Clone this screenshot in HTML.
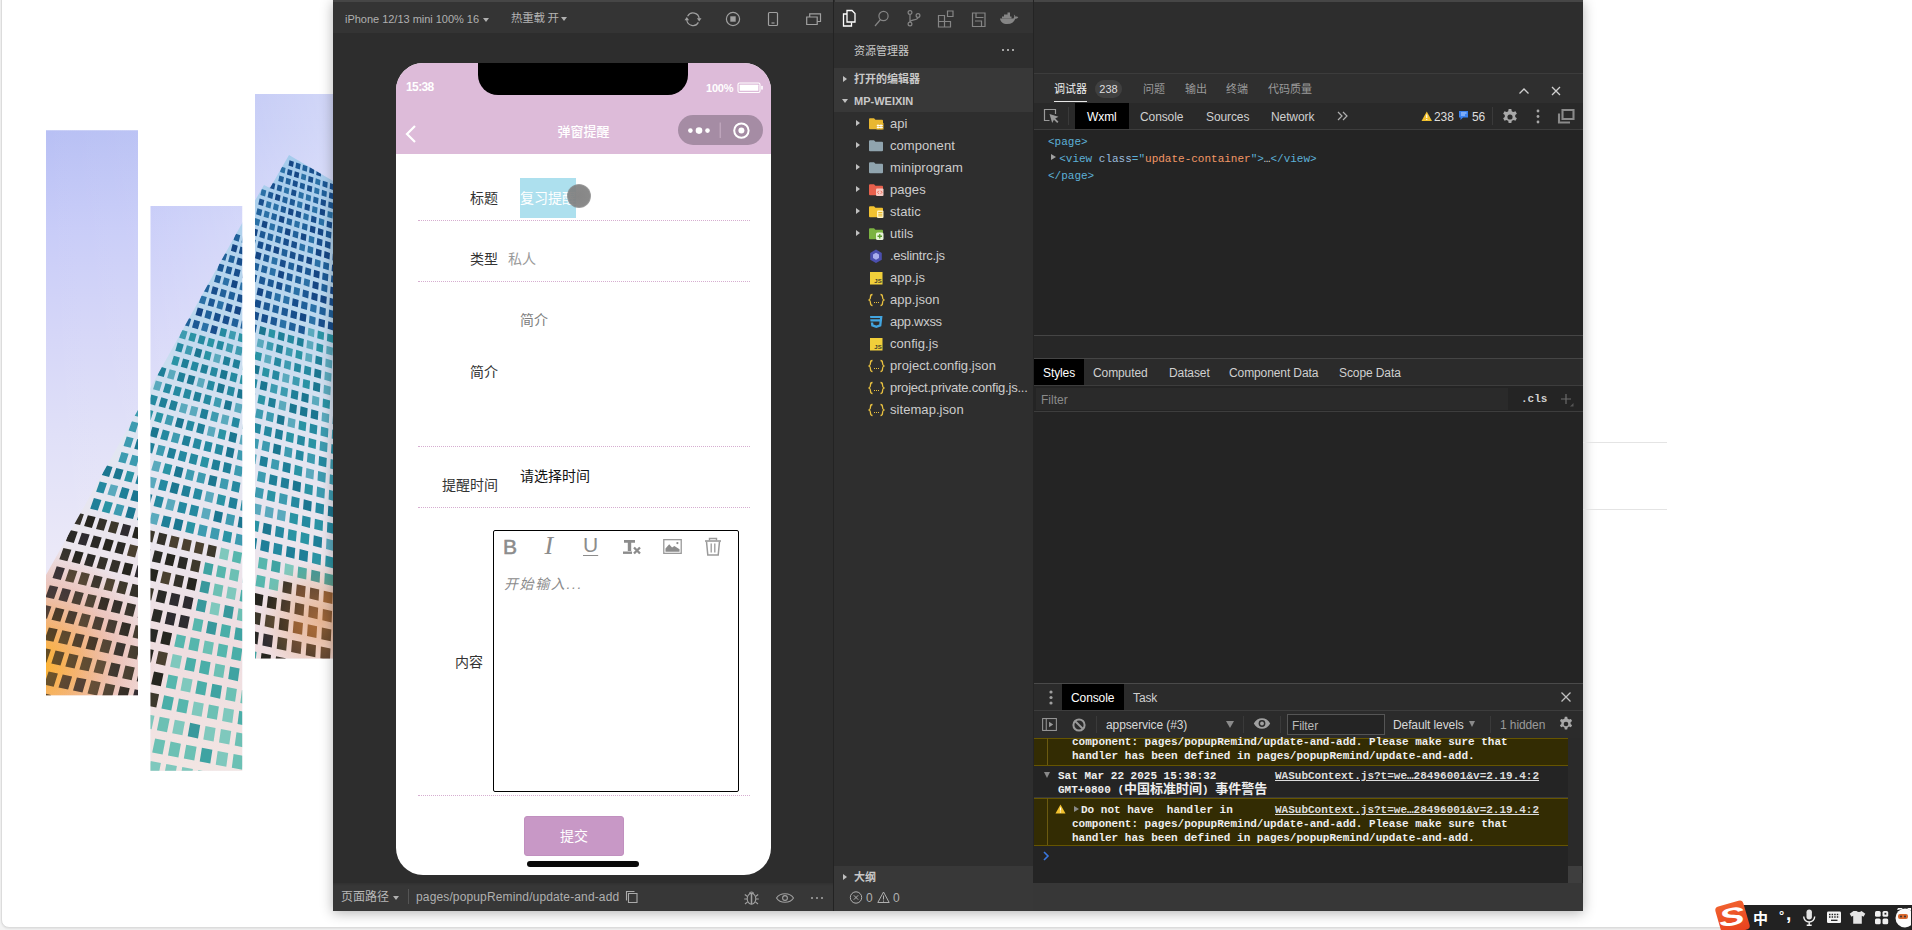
<!DOCTYPE html>
<html lang="zh-CN">
<head>
<meta charset="utf-8">
<title>弹窗提醒</title>
<style>
*{box-sizing:border-box;margin:0;padding:0}
html,body{width:1912px;height:930px;overflow:hidden}
body{background:#f3f3f3;font-family:"Liberation Sans","Noto Sans CJK SC",sans-serif;position:relative;font-size:12px;color:#ccc}
.abs{position:absolute}
#card{position:absolute;left:1px;top:-12px;width:1930px;height:940px;background:#fff;border:1px solid #dcdcdc;border-radius:8px;box-shadow:0 1px 2px rgba(0,0,0,.08)}
#win{position:absolute;left:333px;top:0;width:1250px;height:911px;background:#2e2e2e;box-shadow:0 2px 12px rgba(0,0,0,.3)}
/* simulator */
#sim{position:absolute;left:0;top:0;width:500px;height:911px;background:#2d2d2d}
#simtop{position:absolute;left:0;top:0;width:500px;height:32.500px;background:#343434;border-top:2px solid #464646}
#simbot{position:absolute;left:0;top:883px;width:500px;height:28px;background:linear-gradient(180deg,#313131 0,#373737 3px)}
/* explorer */
#exp{position:absolute;left:500px;top:0;width:200px;height:911px;background:#2e2e2e;border-left:1px solid #232323}
#expin{position:absolute;left:1px;top:0;width:198px;height:911px}
/* debugger */
#dbg{position:absolute;left:700px;top:0;width:550px;height:910px;background:#242424}

.caret{display:inline-block;width:0;height:0;border-left:3.5px solid transparent;border-right:3.5px solid transparent;border-top:4.5px solid #b0b0b0;vertical-align:1px;margin-left:1px}
#phone{position:absolute;left:63px;top:63px;width:375px;height:812px;background:#fff;border-radius:27px;overflow:hidden;color:#333}
#nav{position:absolute;left:0;top:0;width:375px;height:91px;background:#ddbbd9}
#notch{position:absolute;left:82px;top:-20px;width:210px;height:52px;background:#000;border-radius:20px}
#capsule{position:absolute;left:282px;top:52px;width:85px;height:30px;border-radius:15px;background:#a58ca4}
.lbl{position:absolute;font-size:14px;line-height:18px;color:#333;white-space:nowrap}
.dot{position:absolute;left:22px;width:332px;height:0;border-top:1px dotted #d6aed0}
#editor{position:absolute;left:97px;top:467px;width:246px;height:262px;border:1px solid #000;border-radius:2px}
.ic{color:#8c8c8c}

.tw{display:inline-block;width:0;height:0;border-top:3.500px solid transparent;border-bottom:3.500px solid transparent;border-left:4.500px solid #c0c0c0}
.twd{display:inline-block;width:0;height:0;border-left:3.500px solid transparent;border-right:3.500px solid transparent;border-top:4.500px solid #c0c0c0}
.row{position:absolute;left:0;width:198px;height:22px;line-height:22px;font-size:13px;color:#ccc;white-space:nowrap;overflow:hidden}
.row .tw{position:absolute;left:21px;top:7px}
.row .fi{position:absolute;left:33px;top:3px}
.row .fn{position:absolute;left:55px;top:0;letter-spacing:.06px}

.ptab{top:81px;font-size:11px;line-height:16px;color:#9a9a9a;white-space:nowrap}
.dtab{transform:translateY(1px);top:109px;font-size:12px;line-height:15px;color:#d0d0d0;white-space:nowrap;letter-spacing:-.1px}
.code{font:11px/17px "Liberation Mono",monospace;color:#ddd}
.tg{color:#5db0d7}.an{color:#9bbbdc}.av{color:#f29766}
.con{font:bold 11px/14px "Liberation Mono","Noto Sans CJK SC",monospace;color:#eee}
.lnk{text-decoration:underline;color:#ddd}
.warn{left:0;width:535px;background:#332c03;border-top:1px solid #665500;border-bottom:1px solid #665500}
#stat{position:absolute;left:700px;top:883px;width:550px;height:28px;background:#373737}
.cj{font-size:13px}
</style>
</head>
<body>
<div id="card"></div>
<!--BLD0--><svg id="bld" class="abs" style="left:0;top:0" width="346" height="800" viewBox="0 0 346 800">
<defs>
<clipPath id="strips"><rect x="46" y="130.200" width="92" height="565.100"/><rect x="150.500" y="206" width="91.700" height="564.800"/><rect x="255" y="94" width="92" height="564.500"/></clipPath>
<clipPath id="sil"><polygon points="289,155 345,188 345,800 -80,800 46,575 250,209 264,185 270,188"/></clipPath>
<linearGradient id="sky" x1="0" y1="0" x2="0" y2="1"><stop offset="0" stop-color="#b4bcf3"/><stop offset=".06" stop-color="#b8c0f4"/><stop offset=".2" stop-color="#c8ccf8"/><stop offset=".35" stop-color="#d5d6f8"/><stop offset=".5" stop-color="#e0e0f8"/><stop offset=".68" stop-color="#ebe9f8"/><stop offset="1" stop-color="#f0eef8"/></linearGradient><linearGradient id="skyh" x1="0" y1="0" x2="1" y2="0"><stop offset="0" stop-color="#fff" stop-opacity="0"/><stop offset=".3" stop-color="#fff" stop-opacity=".05"/><stop offset="1" stop-color="#fff" stop-opacity=".42"/></linearGradient>
<linearGradient id="frame" x1="0" y1="0" x2="0" y2="1"><stop offset="0" stop-color="#a4cbec"/><stop offset=".25" stop-color="#bcd8ee"/><stop offset=".45" stop-color="#e2e6f2"/><stop offset=".6" stop-color="#ebe6ee"/><stop offset=".75" stop-color="#efdde0"/><stop offset="1" stop-color="#f3e8e4"/></linearGradient>
<radialGradient id="glow" gradientUnits="userSpaceOnUse" cx="36" cy="665" r="120"><stop offset="0" stop-color="#ffb41e" stop-opacity=".95"/><stop offset=".35" stop-color="#f6a040" stop-opacity=".6"/><stop offset=".7" stop-color="#e89a80" stop-opacity=".3"/><stop offset="1" stop-color="#e89a80" stop-opacity="0"/></radialGradient>
<radialGradient id="glow2" gradientUnits="userSpaceOnUse" cx="320" cy="620" r="60"><stop offset="0" stop-color="#e08a40" stop-opacity=".5"/><stop offset="1" stop-color="#e08a40" stop-opacity="0"/></radialGradient>
</defs>
<g clip-path="url(#strips)">
<rect x="40" y="90" width="310" height="690" fill="url(#sky)"/><rect x="40" y="90" width="310" height="690" fill="url(#skyh)"/>
<g clip-path="url(#sil)">
<rect x="-90" y="150" width="440" height="660" fill="url(#frame)"/>
<rect x="-90" y="150" width="440" height="660" fill="url(#glow)"/>
<path fill="#154684" d="M289.5 160.2L293.9 161.7L293 167.1L288.5 165.6zM294.8 171.2L299.3 172.7L298.5 178.3L293.9 176.7zM275.9 193.8L280.6 195.4L279.6 201.2L274.8 199.7zM320.2 208.4L325.2 210.1L324.7 216.1L319.6 214.4zM288.8 208.1L293.8 209.8L292.9 215.8L287.9 214.2zM279.7 215.4L284.7 217.1L283.7 223.2L278.6 221.6zM310.4 225.4L315.6 227.1L314.9 233.4L309.7 231.7zM318.2 228L323.5 229.7L322.9 236L317.6 234.2zM262.7 220.5L267.7 222.1L266.5 228.4L261.4 226.7zM285.6 227.9L290.8 229.6L289.8 235.9L284.6 234.2zM301.3 233L306.5 234.6L305.8 241L300.5 239.3zM253 228.2L258 229.8L256.7 236.2L251.6 234.5zM316.2 248.5L321.7 250.2L321.1 256.7L315.6 255zM324.5 251.1L330 252.9L329.5 259.4L323.9 257.6zM332.8 253.8L338.4 255.5L338 262.1L332.4 260.3zM274.3 246L279.6 247.7L278.5 254.3L273.1 252.6zM306.9 256.4L312.3 258.1L311.6 264.8L306.1 263zM332.1 264.4L337.7 266.2L337.4 272.9L331.6 271.1zM232.6 244.1L237.8 245.8L236.1 252.4L230.9 250.8zM256.3 251.6L261.6 253.3L260.2 260L254.9 258.3zM314.1 269.8L319.8 271.6L319.2 278.5L313.4 276.7zM278.8 270.2L284.4 271.9L283.3 278.9L277.7 277.1zM313 280.9L318.8 282.7L318.2 289.7L312.3 287.9zM330.6 286.4L336.5 288.2L336.1 295.3L330.1 293.4zM311.9 292.2L317.8 294L317.2 301.2L311.2 299.3zM320.8 295L326.8 296.8L326.2 304L320.2 302.1zM232.5 279.7L238 281.4L236.4 288.6L230.8 286.9zM257.9 287.5L263.6 289.3L262.3 296.5L256.5 294.7zM300.4 312.8L306.5 314.6L305.7 322.1L299.5 320.2zM235.6 305.8L241.5 307.5L239.9 315L234 313.3zM197.7 307.4L203.4 309.1L201.4 316.7L195.5 315z"/><path fill="#1c5894" d="M296.2 162.5L300.7 164L299.8 169.4L295.3 167.9zM322.9 180.7L327.7 182.3L327.2 187.9L322.4 186.3zM300.4 182.5L305.1 184.1L304.3 189.7L299.6 188.1zM277.7 184.5L282.3 186.1L281.3 191.8L276.6 190.3zM328.6 201.5L333.6 203.1L333.2 209L328.1 207.3zM268.8 191.4L273.5 193L272.3 198.9L267.5 197.3zM290.4 198.6L295.2 200.2L294.3 206.1L289.4 204.5zM335.5 213.5L340.7 215.2L340.3 221.2L335.1 219.5zM281.4 205.7L286.3 207.3L285.3 213.3L280.4 211.7zM250.2 205.8L255 207.4L253.6 213.5L248.7 211.9zM326.2 230.6L331.5 232.3L331 238.6L325.7 236.8zM334.2 233.2L339.5 234.9L339.2 241.2L333.8 239.5zM342.3 235.8L347.7 237.6L347.4 243.9L342 242.1zM245.4 225.7L250.4 227.3L248.9 233.7L243.9 232.1zM260.6 230.6L265.7 232.3L264.4 238.7L259.3 237zM264.3 254.1L269.6 255.8L268.4 262.5L263 260.8zM305.6 267.2L311.2 268.9L310.5 275.7L304.8 274zM322.7 272.5L328.4 274.3L327.9 281.2L322.1 279.4zM331.4 275.3L337.1 277.1L336.7 284L330.9 282.1zM245.9 259.9L251.2 261.6L249.8 268.4L244.4 266.7zM287.3 272.8L292.9 274.6L291.9 281.5L286.3 279.8zM219 263.4L224.3 265.1L222.5 272L217.1 270.4zM227.1 265.9L232.4 267.6L230.7 274.5L225.3 272.9zM243.4 271L248.9 272.7L247.4 279.7L241.9 278zM251.7 273.5L257.2 275.3L255.8 282.3L250.3 280.6zM260.1 276.1L265.6 277.9L264.4 284.9L258.7 283.2zM268.5 278.8L274.1 280.5L273 287.6L267.3 285.8zM303.1 289.5L308.9 291.3L308.2 298.4L302.3 296.6zM338.9 300.6L345 302.5L344.7 309.7L338.6 307.8zM266.5 290.2L272.2 291.9L271 299.2L265.2 297.4zM246.9 296.5L252.7 298.3L251.2 305.6L245.4 303.9zM264.4 301.9L270.3 303.6L269.1 311L263.1 309.2zM282.3 307.3L288.2 309.1L287.2 316.5L281.2 314.7zM209.7 298L215.3 299.7L213.4 307.1L207.7 305.4zM271.4 316.5L277.4 318.3L276.3 325.9L270.2 324.1zM299 324.9L305.2 326.7L304.4 334.4L298.2 332.5zM194.2 319.7L200.1 321.5L197.9 329.3L192 327.5z"/><path fill="#20609a" d="M303 164.8L307.5 166.3L306.8 171.7L302.2 170.2zM279.4 175.5L284 177L283 182.6L278.3 181.1zM286.3 177.8L291 179.3L290 185L285.4 183.4zM322 189.7L326.9 191.4L326.4 197.1L321.5 195.4zM313.7 196.5L318.6 198.1L318 204L313 202.3zM283.1 196.2L287.9 197.8L286.9 203.7L282.1 202.1zM257.4 208.2L262.3 209.8L261 215.9L256.1 214.3zM272.2 213L277.1 214.6L276 220.8L271 219.1zM287.3 217.9L292.3 219.5L291.4 225.7L286.3 224.1zM302.6 222.9L307.7 224.6L307 230.8L301.8 229.1zM277.9 225.4L283 227L282 233.4L276.8 231.7zM293.4 230.4L298.6 232.1L297.8 238.4L292.5 236.7zM341.8 246L347.3 247.8L347 254.3L341.4 252.5zM268.3 233.1L273.5 234.7L272.3 241.2L267.1 239.5zM276.1 235.6L281.3 237.3L280.2 243.7L275 242zM235.3 233.6L240.3 235.2L238.7 241.7L233.6 240.1zM250.7 238.5L255.8 240.1L254.4 246.7L249.2 245zM282.3 248.6L287.7 250.3L286.7 256.9L281.3 255.2zM323.6 261.7L329.2 263.5L328.7 270.2L323 268.4zM340.7 267.1L346.4 268.9L346.1 275.7L340.3 273.9zM248.3 249.1L253.6 250.7L252.1 257.4L246.8 255.8zM288.9 261.9L294.4 263.6L293.4 270.4L287.9 268.6zM340.1 278L345.9 279.9L345.6 286.8L339.7 284.9zM222 252.4L227.2 254.1L225.4 260.8L220.1 259.2zM229.9 254.9L235.1 256.5L233.5 263.3L228.1 261.7zM254 262.4L259.4 264.1L258.1 271L252.6 269.3zM262.2 265L267.7 266.7L266.4 273.6L260.9 271.9zM295.8 275.5L301.4 277.3L300.6 284.2L294.9 282.4zM321.8 283.6L327.6 285.5L327.1 292.5L321.2 290.6zM339.5 289.2L345.5 291L345.2 298.1L339.2 296.2zM285.6 284.1L291.4 285.8L290.4 292.9L284.6 291.1zM216 274.7L221.4 276.3L219.5 283.4L214 281.8zM301.7 301L307.7 302.8L306.9 310.1L300.9 308.3zM319.9 306.6L325.9 308.4L325.4 315.8L319.3 313.9zM329.1 309.4L335.2 311.3L334.7 318.6L328.6 316.7zM338.3 312.2L344.5 314.1L344.2 321.5L337.9 319.6zM204.5 283.6L210 285.3L208 292.6L202.4 290.9zM221.3 288.7L226.8 290.4L225.1 297.7L219.4 296zM229.7 291.3L235.4 293L233.7 300.3L228 298.6zM273.3 304.6L279.2 306.3L278.1 313.8L272.1 312zM289.7 322.1L295.9 323.9L294.9 331.5L288.7 329.7zM206.4 310L212.2 311.7L210.2 319.4L204.4 317.6zM232.9 317.9L238.9 319.7L237.2 327.4L231.2 325.6zM241.9 320.6L247.9 322.4L246.4 330.1L240.3 328.3zM251 323.3L257 325.1L255.6 332.8L249.5 331zM185.4 317.1L191.2 318.9L188.9 326.6L183.1 324.9z"/><path fill="#184e8c" d="M309.8 167.1L314.4 168.7L313.8 174.1L309.1 172.5zM316.8 169.5L321.4 171L320.8 176.5L316.2 174.9zM287.9 168.9L292.4 170.4L291.5 175.9L286.9 174.4zM308.7 175.9L313.4 177.5L312.7 183L308 181.4zM330.1 183.1L334.9 184.7L334.5 190.4L329.7 188.7zM337.4 185.6L342.3 187.2L342 192.9L337 191.2zM293.3 180.1L298 181.7L297.1 187.3L292.4 185.8zM307.5 184.9L312.3 186.5L311.6 192.2L306.8 190.6zM329.4 192.2L334.3 193.8L333.9 199.6L328.9 197.9zM270.7 182.2L275.3 183.7L274.2 189.5L269.5 187.9zM291.9 189.3L296.6 190.8L295.7 196.6L290.9 195zM321.1 199L326.1 200.6L325.5 206.5L320.5 204.8zM336.2 204L341.2 205.7L340.9 211.6L335.8 209.9zM305.1 203.5L310.1 205.1L309.4 211L304.4 209.4zM259.6 198.5L264.3 200.1L263.1 206.1L258.3 204.5zM296.3 210.6L301.3 212.2L300.5 218.3L295.4 216.6zM311.5 215.6L316.6 217.2L316 223.3L310.8 221.7zM327 220.7L332.2 222.4L331.7 228.5L326.5 226.8zM247.8 215.7L252.7 217.2L251.3 223.5L246.3 221.9zM317.3 238.1L322.6 239.8L322 246.2L316.6 244.5zM325.3 240.7L330.7 242.5L330.3 248.9L324.8 247.1zM284 238.1L289.2 239.8L288.3 246.3L283 244.6zM291.9 240.7L297.2 242.4L296.4 248.8L291 247.1zM258.5 241L263.7 242.6L262.4 249.2L257.1 247.5zM266.3 243.5L271.6 245.2L270.4 251.7L265.1 250.1zM290.4 251.1L295.8 252.9L294.9 259.5L289.5 257.8zM298.6 253.7L304 255.5L303.2 262.1L297.7 260.4zM240.4 246.6L245.6 248.2L244.1 254.9L238.8 253.3zM280.6 259.3L286 261L285 267.7L279.5 266zM297.2 264.5L302.7 266.3L301.9 273.1L296.3 271.3zM237.8 257.4L243.1 259L241.6 265.9L236.2 264.2zM235.2 268.4L240.6 270.1L239 277.1L233.5 275.4zM277 281.4L282.7 283.2L281.6 290.2L275.9 288.5zM329.8 297.8L335.8 299.6L335.4 306.8L329.4 304.9zM292.8 298.3L298.7 300.1L297.8 307.3L291.9 305.5zM212.8 286.2L218.4 287.9L216.5 295.1L210.9 293.4zM238.3 293.9L244 295.6L242.4 303L236.7 301.2zM255.6 299.2L261.4 300.9L260.1 308.3L254.2 306.5zM291.3 310L297.3 311.9L296.4 319.3L290.3 317.5zM318.9 318.4L325.1 320.3L324.5 327.8L318.3 325.9zM328.3 321.3L334.5 323.2L334.1 330.7L327.7 328.8zM337.7 324.1L344 326.1L343.7 333.6L337.3 331.7zM226.9 303.1L232.7 304.9L231 312.4L225.1 310.6zM253.4 311.1L259.3 312.9L257.9 320.4L251.9 318.6zM262.3 313.8L268.3 315.6L267 323.2L261 321.4zM215.2 312.6L221 314.4L219.1 322L213.2 320.3zM224 315.3L229.9 317L228.1 324.7L222.2 322.9zM212 325L218 326.8L216.1 334.6L210 332.8z"/><path fill="#2a70a6" d="M281.1 166.6L285.6 168.1L284.6 173.6L280.1 172.1zM301.7 173.5L306.3 175.1L305.6 180.6L300.9 179.1zM315.8 178.3L320.5 179.9L319.9 185.4L315.1 183.8zM314.7 187.3L319.5 188.9L319 194.6L314.1 193zM336.8 194.7L341.8 196.4L341.4 202.1L336.4 200.4zM284.7 186.9L289.4 188.4L288.5 194.2L283.7 192.6zM299.1 191.6L303.9 193.2L303.1 199L298.2 197.4zM306.3 194.1L311.2 195.7L310.5 201.5L305.6 199.9zM261.7 189.1L266.3 190.6L265.1 196.5L260.4 194.9zM297.7 201L302.6 202.6L301.8 208.6L296.9 206.9zM312.6 205.9L317.6 207.6L317 213.6L311.9 211.9zM327.8 211L332.9 212.6L332.5 218.6L327.3 217zM266.8 200.9L271.6 202.5L270.4 208.5L265.6 206.9zM274.1 203.3L278.9 204.9L277.8 210.9L272.9 209.3zM303.9 213.1L308.9 214.7L308.2 220.8L303.1 219.1zM319.2 218.1L324.4 219.8L323.8 225.9L318.6 224.2zM334.9 223.2L340.1 225L339.8 231.1L334.5 229.4zM264.8 210.6L269.7 212.2L268.5 218.3L263.5 216.7zM294.9 220.4L300 222L299.1 228.2L294 226.6zM255.2 218.1L260.2 219.7L258.8 225.9L253.8 224.3zM270.3 222.9L275.3 224.6L274.2 230.8L269.1 229.2zM309.2 235.5L314.5 237.2L313.9 243.6L308.5 241.9zM333.5 243.4L339 245.1L338.6 251.6L333.1 249.8zM300 243.2L305.3 244.9L304.5 251.4L299.1 249.7zM308.1 245.8L313.4 247.6L312.8 254.1L307.3 252.3zM341.2 256.5L346.8 258.3L346.6 264.9L340.9 263.1zM242.9 236L248 237.7L246.5 244.2L241.4 242.6zM315.2 259L320.7 260.8L320.1 267.5L314.5 265.7zM272.4 256.7L277.8 258.4L276.7 265.1L271.2 263.4zM270.5 267.6L276 269.3L274.8 276.2L269.3 274.5zM304.4 278.2L310.1 280L309.3 286.9L303.6 285.1zM294.3 286.7L300.1 288.5L299.2 295.7L293.4 293.9zM224.2 277.2L229.7 278.9L227.9 286L222.4 284.3zM240.9 282.3L246.5 284L244.9 291.2L239.3 289.5zM249.3 284.9L255 286.6L253.6 293.8L247.9 292.1zM275.2 292.8L281 294.6L279.9 301.9L274 300.1zM284 295.5L289.8 297.3L288.8 304.6L282.9 302.8zM310.8 303.8L316.8 305.6L316.1 312.9L310 311.1zM309.6 315.6L315.7 317.5L315.1 324.9L308.9 323.1zM201.2 295.4L206.8 297.1L204.7 304.5L199 302.8zM218.3 300.5L224 302.3L222.1 309.7L216.4 308zM244.5 308.4L250.3 310.2L248.8 317.7L242.9 315.9zM280.5 319.3L286.6 321.1L285.6 328.7L279.4 326.9zM203.1 322.4L209 324.1L206.9 331.9L201 330.2z"/><path fill="#5aa9bd" d="M308.4 327.7L314.6 329.6L314 337.2L307.7 335.3zM307.2 340.1L313.5 342L312.9 349.8L306.4 347.9zM326.6 345.8L333.1 347.8L332.6 355.6L326.1 353.7zM258 338.6L264.2 340.4L262.9 348.3L256.6 346.5zM305.9 352.7L312.4 354.6L311.7 362.6L305.1 360.7zM325.7 358.5L332.3 360.5L331.9 368.5L325.2 366.6zM265.3 354.2L271.7 356L270.5 364.1L264 362.3zM324.9 371.5L331.6 373.5L331.1 381.7L324.3 379.7zM214.9 353.4L221.2 355.2L219.3 363.4L213 361.6zM283.1 373L289.7 374.9L288.7 383.3L282 381.4zM324 384.8L330.8 386.8L330.3 395.2L323.4 393.2zM312.5 395.4L319.4 397.4L318.8 405.9L311.8 403.9zM333.7 401.4L340.8 403.5L340.4 412.1L333.2 410zM169.7 369.3L176 371.1L173.5 379.7L167.1 377.9zM198.7 377.5L205.1 379.3L203 387.9L196.5 386.1zM248.6 391.6L255.3 393.5L253.9 402.1L247.1 400.2zM279.6 400.3L286.5 402.3L285.4 411L278.4 409zM322.1 412.3L329.3 414.3L328.8 423.1L321.5 421.1zM155.8 380.5L162.2 382.2L159.5 391L153 389.2zM235.8 402.7L242.6 404.6L241 413.5L234.1 411.6zM288.4 417.4L295.6 419.4L294.6 428.3L287.4 426.3zM181.3 402.9L188 404.7L185.7 413.7L178.9 411.8zM191.5 405.7L198.3 407.5L196.1 416.5L189.2 414.7zM222.5 414.2L229.4 416.1L227.6 425.1L220.6 423.2zM208.8 425.9L215.8 427.8L213.9 437.1L206.8 435.2zM241 434.7L248.2 436.6L246.6 445.9L239.3 443.9zM249.5 452.7L256.8 454.7L255.4 464.2L247.9 462.2zM306.4 467.9L314.1 470L313.4 479.6L305.6 477.5zM154.1 460.4L161.3 462.3L158.6 472.1L151.2 470.2zM244.4 483.9L252.1 485.9L250.6 495.8L242.8 493.8zM149.5 476.4L156.9 478.3L154.1 488.4L146.6 486.5zM206.5 491L214.2 492.9L212.2 503.1L204.4 501.1zM253.8 503.1L261.7 505.1L260.3 515.3L252.3 513.3zM265.8 506.1L273.8 508.2L272.6 518.4L264.5 516.4zM277.9 509.2L286 511.3L284.9 521.5L276.8 519.5zM110.8 484.2L118.2 486L114.9 496.4L107.4 494.5zM167.9 498.6L175.6 500.5L173 510.9L165.2 508.9zM203.1 507.4L211 509.4L208.9 519.8L201 517.8zM326.5 538.5L335 540.7L334.6 551.2L326 549zM151.8 512.4L159.6 514.4L156.8 525L148.9 523.1z"/><path fill="#2a93a4" d="M317.9 330.5L324.2 332.4L323.6 340.1L317.2 338.2zM327.4 333.4L333.8 335.3L333.3 343L326.9 341.1zM269.4 328.8L275.5 330.6L274.4 338.4L268.2 336.5zM316.8 342.9L323.3 344.9L322.7 352.7L316.2 350.8zM336.4 348.8L343 350.7L342.6 358.6L336 356.6zM239.3 333.1L245.5 334.9L243.9 342.7L237.7 340.9zM296.2 349.8L302.6 351.7L301.8 359.7L295.3 357.8zM335.8 361.5L342.4 363.5L342.1 371.5L335.3 369.5zM190.6 332.4L196.6 334.1L194.4 342.1L188.3 340.3zM208.8 337.7L214.9 339.4L212.9 347.5L206.8 345.7zM255.7 351.4L262 353.2L260.7 361.3L254.3 359.4zM205.5 350.6L211.7 352.4L209.7 360.6L203.4 358.8zM243.6 361.6L250.1 363.5L248.6 371.8L242.1 369.9zM263.2 367.3L269.7 369.2L268.5 377.5L261.9 375.6zM303.3 378.9L310.1 380.8L309.4 389.2L302.5 387.2zM334.4 387.8L341.3 389.8L341 398.2L334 396.2zM173.8 355.8L179.9 357.6L177.5 365.9L171.2 364.2zM241.1 375L247.6 376.9L246.1 385.3L239.5 383.5zM323 398.4L330.1 400.4L329.6 409L322.5 407zM258.8 394.5L265.6 396.4L264.3 405.1L257.4 403.1zM299.2 420.4L306.4 422.4L305.6 431.3L298.4 429.3zM286.8 431.8L294.1 433.8L293.1 443L285.7 441zM308.9 437.9L316.3 440L315.7 449.1L308.2 447.1zM146.7 409.1L153.4 410.9L150.6 420.1L143.8 418.3zM156.9 411.9L163.6 413.7L161 422.9L154.1 421zM219.5 428.8L226.5 430.7L224.7 440L217.5 438.1zM294.9 464.8L302.5 466.9L301.6 476.4L293.9 474.4zM202.1 456.2L209.4 458.2L207.3 467.9L199.9 465.9zM305.2 483.4L313 485.5L312.3 495.3L304.3 493.2zM165.1 463.2L172.4 465.1L169.8 475L162.4 473.1zM267.9 490L275.7 492L274.5 502L266.6 500zM127.2 470.7L134.5 472.5L131.5 482.6L124.1 480.8zM218.2 494L226 495.9L224.1 506.1L216.3 504.1zM290.2 512.4L298.3 514.5L297.4 524.7L289.2 522.6zM314.9 518.7L323.1 520.8L322.6 531.1L314.2 529zM251.4 519.6L259.5 521.6L258.1 532.1L249.9 530zM288.5 529L296.8 531L295.9 541.5L287.5 539.4zM301.1 532.1L309.5 534.2L308.7 544.7L300.2 542.6zM339.4 541.8L348 543.9L347.7 554.4L339 552.3zM105.3 500.9L112.9 502.8L109.4 513.4L101.8 511.5zM187.5 521.3L195.5 523.3L193.2 533.9L185.2 531.9zM224.1 530.4L232.2 532.4L230.5 543.1L222.2 541zM312.6 552.3L321.2 554.4L320.6 565.2L311.9 563zM325.7 555.5L334.3 557.7L333.9 568.4L325.1 566.3z"/><path fill="#3d9bb0" d="M337.1 336.3L343.5 338.3L343.2 346L336.7 344zM230.2 330.4L236.2 332.1L234.5 340L228.4 338.2zM267.4 341.3L273.7 343.2L272.5 351.1L266.1 349.3zM286.5 347L292.9 348.9L291.9 356.8L285.5 354.9zM181.6 329.7L187.5 331.5L185.2 339.4L179.2 337.7zM227.3 343.1L233.5 344.9L231.8 352.9L225.5 351.1zM236.7 345.8L242.9 347.6L241.3 355.7L235 353.9zM246.2 348.6L252.4 350.4L251 358.5L244.6 356.6zM284.8 359.9L291.3 361.8L290.3 369.9L283.8 368zM186.9 345.3L193 347L190.8 355.2L184.6 353.4zM293.2 375.9L299.9 377.9L299 386.2L292.2 384.3zM271.2 383.6L277.9 385.5L276.7 394L269.9 392.1zM281.4 386.5L288.1 388.4L287.1 397L280.2 395zM215.3 397L222 398.9L220.1 407.7L213.3 405.8zM256.6 408.5L263.5 410.4L262.2 419.3L255.1 417.4zM267.1 411.4L274.1 413.4L272.9 422.3L265.8 420.3zM321.1 426.5L328.4 428.5L327.9 437.5L320.5 435.5zM332.2 429.6L339.6 431.6L339.2 440.6L331.7 438.6zM212.1 411.3L219 413.2L217 422.2L210.1 420.3zM320.2 441L327.6 443.1L327.1 452.2L319.5 450.2zM136.7 406.4L143.3 408.2L140.4 417.3L133.6 415.5zM167.1 414.6L173.9 416.5L171.4 425.7L164.5 423.8zM251.9 437.6L259.1 439.6L257.7 448.9L250.4 446.9zM262.9 440.6L270.2 442.6L268.9 451.9L261.5 449.9zM285.1 446.6L292.5 448.6L291.5 458L284 456zM307.7 452.8L315.2 454.8L314.6 464.2L306.9 462.1zM330.7 459L338.4 461.1L338 470.5L330.2 468.4zM131.8 421.2L138.5 423L135.5 432.4L128.6 430.6zM173.4 432.3L180.4 434.2L177.9 443.6L170.8 441.8zM238.3 449.7L245.7 451.7L244.1 461.2L236.7 459.2zM272 458.7L279.5 460.7L278.3 470.3L270.7 468.2zM318.1 471.1L325.9 473.1L325.3 482.7L317.5 480.6zM329.9 474.2L337.7 476.3L337.3 485.9L329.4 483.8zM126.7 436.4L133.6 438.2L130.6 447.8L123.5 446zM158.5 444.8L165.6 446.6L162.9 456.3L155.8 454.4zM235.6 465.1L243.1 467.1L241.5 476.8L233.9 474.8zM258.4 471.1L266 473.1L264.7 482.9L257 480.9zM317.1 486.6L325 488.7L324.4 498.5L316.4 496.4zM329.1 489.8L337.1 491.9L336.7 501.7L328.6 499.6zM121.5 451.9L128.6 453.8L125.5 463.6L118.3 461.8zM132.3 454.7L139.4 456.6L136.4 466.4L129.2 464.6zM187.3 469L194.7 470.9L192.5 480.9L184.9 478.9zM198.6 471.9L206 473.9L203.9 483.8L196.3 481.9zM221.3 477.9L228.9 479.8L227.1 489.8L219.4 487.8zM256.1 486.9L263.9 488.9L262.5 498.9L254.7 496.9zM279.8 493.1L287.7 495.1L286.6 505.1L278.7 503zM227.1 513.5L235.1 515.5L233.3 525.9L225.2 523.9zM116.8 503.8L124.4 505.7L121.2 516.2L113.4 514.3zM199.6 524.3L207.7 526.3L205.6 536.9L197.4 534.9zM211.8 527.3L219.9 529.3L218 540L209.8 538zM236.5 533.4L244.7 535.5L243.1 546.1L234.7 544.1z"/><path fill="#1b7690" d="M260.2 326L266.3 327.9L265 335.6L258.8 333.8zM314.7 368.6L321.4 370.5L320.8 378.7L314 376.8zM196.2 347.9L202.3 349.7L200.2 357.9L194 356.1zM253.4 364.5L259.9 366.3L258.5 374.6L251.9 372.7zM313.6 381.8L320.4 383.8L319.8 392.2L312.9 390.2zM221.4 369.4L227.9 371.3L226.1 379.7L219.6 377.8zM261 380.7L267.7 382.6L266.4 391.1L259.7 389.2zM302 392.4L308.9 394.4L308.2 402.9L301.2 400.9zM188.9 374.8L195.4 376.6L193.1 385.1L186.6 383.3zM218.4 383.1L225 384.9L223.1 393.5L216.5 391.7zM238.4 388.7L245.1 390.6L243.6 399.3L236.8 397.4zM290.1 403.3L297 405.2L296.1 414L289.1 412zM300.6 406.2L307.7 408.2L306.9 417L299.8 415zM311.3 409.3L318.4 411.3L317.8 420L310.6 418zM225.5 399.9L232.2 401.7L230.5 410.6L223.6 408.7zM277.7 414.4L284.8 416.4L283.7 425.3L276.6 423.3zM243.6 420L250.6 421.9L249.1 431L242 429zM177.4 417.4L184.3 419.3L181.9 428.5L174.9 426.6zM230.2 431.7L237.3 433.7L235.6 442.9L228.4 441zM273.9 443.6L281.3 445.6L280.2 454.9L272.7 452.9zM152.4 426.7L159.3 428.6L156.6 438L149.6 436.1zM227.3 446.8L234.6 448.7L232.8 458.2L225.5 456.2zM137.2 439.1L144.2 441L141.3 450.6L134.2 448.8zM247 468.1L254.5 470.1L253.1 479.8L245.4 477.8zM293.3 480.3L301.1 482.4L300.3 492.2L292.4 490.1zM176.1 466.1L183.5 468L181.1 477.9L173.6 476zM209.9 474.9L217.4 476.8L215.5 486.8L207.8 484.8zM303.8 499.3L311.8 501.4L311.1 511.4L303 509.3zM328.3 505.7L336.4 507.8L336 517.8L327.7 515.7zM105.3 465.1L112.5 466.9L109.1 477L101.8 475.1zM116.3 467.9L123.5 469.7L120.3 479.8L112.9 477.9zM172.1 482.1L179.6 484.1L177.1 494.2L169.5 492.3zM340 525.1L348.4 527.3L348.1 537.6L339.6 535.4zM133.4 489.9L140.9 491.8L137.9 502.1L130.3 500.2zM144.8 492.7L152.4 494.7L149.5 505L141.9 503.1zM215.1 510.4L223 512.4L221.1 522.9L213.1 520.9zM239.2 516.5L247.2 518.5L245.6 529L237.5 527zM263.7 522.7L271.8 524.7L270.6 535.2L262.3 533.1zM128.4 506.6L136 508.5L133 519.1L125.2 517.2zM140 509.5L147.8 511.4L144.8 522.1L137 520.1zM175.5 518.3L183.4 520.3L181 530.9L173 529z"/><path fill="#1f7f98" d="M278.7 331.6L284.9 333.4L283.9 341.2L277.6 339.3zM297.6 337.2L303.9 339.1L303.1 346.9L296.7 345zM276.9 344.1L283.2 346L282.1 354L275.7 352.1zM315.8 355.6L322.3 357.5L321.8 365.6L315.1 363.6zM224.4 356.1L230.7 357.9L229 366.1L222.6 364.3zM234 358.9L240.4 360.7L238.7 368.9L232.3 367.1zM183.1 358.5L189.4 360.3L187.1 368.6L180.8 366.8zM202.1 363.9L208.5 365.7L206.4 374.1L200 372.3zM291.6 389.4L298.5 391.4L297.6 399.9L290.7 398zM160.2 366.6L166.4 368.4L163.8 377L157.5 375.2zM179.3 372L185.6 373.8L183.3 382.4L176.8 380.6zM269.2 397.4L276 399.3L274.8 408L267.9 406.1zM333 415.4L340.2 417.4L339.8 426.2L332.5 424.1zM195.1 391.4L201.7 393.3L199.6 402.1L192.9 400.2zM161.3 397.3L167.9 399.2L165.2 408.1L158.6 406.3zM171.3 400.1L177.9 401.9L175.4 410.9L168.7 409.1zM201.8 408.5L208.6 410.3L206.5 419.4L199.6 417.5zM275.9 428.8L283.1 430.8L282 439.9L274.7 438zM198.3 423.1L205.2 425L203.1 434.2L196.1 432.3zM142 423.9L148.9 425.8L146 435.2L139.1 433.3zM184 435.2L191.1 437.1L188.7 446.5L181.6 444.6zM260.7 455.7L268.1 457.7L266.8 467.2L259.3 465.2zM283.4 461.8L290.9 463.8L289.9 473.3L282.3 471.3zM147.8 441.9L154.9 443.8L152.1 453.4L144.9 451.6zM169.3 447.6L176.4 449.5L173.9 459.1L166.7 457.2zM213.2 459.2L220.5 461.1L218.6 470.8L211.1 468.9zM224.3 462.1L231.8 464.1L230 473.8L222.5 471.8zM270 474.2L277.6 476.2L276.5 485.9L268.7 483.9zM281.6 477.2L289.3 479.3L288.3 489L280.5 487zM340.6 508.9L348.8 511L348.6 521L340.2 518.9zM138.3 473.5L145.7 475.4L142.7 485.5L135.3 483.6zM183.5 485.1L191 487L188.7 497.2L181 495.2zM230 497L237.8 499L236.1 509.2L228.2 507.2zM122.1 487L129.5 488.9L126.4 499.2L118.8 497.3zM313.8 535.3L322.2 537.4L321.6 547.9L313.1 545.8zM93.9 498.1L101.4 499.9L97.8 510.5L90.2 508.7zM163.6 515.4L171.5 517.3L168.9 527.9L160.9 526zM248.9 536.5L257.2 538.6L255.7 549.2L247.4 547.2zM261.5 539.6L269.8 541.7L268.5 552.4L260.1 550.3zM286.9 545.9L295.3 548L294.4 558.7L285.8 556.6zM299.7 549.1L308.2 551.2L307.4 561.9L298.8 559.8zM338.8 558.8L347.5 560.9L347.2 571.7L338.4 569.5z"/><path fill="#2589a0" d="M288.1 334.4L294.4 336.2L293.4 344L287.1 342.1zM221.1 327.7L227.1 329.4L225.3 337.3L219.2 335.5zM248.6 335.8L254.8 337.6L253.3 345.5L247.1 343.7zM199.7 335L205.7 336.8L203.6 344.8L197.5 343zM218 340.4L224.2 342.1L222.3 350.2L216.1 348.4zM275 357L281.5 358.9L280.4 367L273.8 365.1zM294.7 362.7L301.3 364.7L300.4 372.8L293.8 370.9zM304.7 365.6L311.3 367.6L310.6 375.8L303.8 373.8zM335.1 374.5L341.9 376.5L341.5 384.7L334.7 382.7zM177.7 342.6L183.8 344.4L181.4 352.5L175.3 350.8zM273.1 370.1L279.7 372L278.6 380.4L271.9 378.5zM192.6 361.2L198.9 363L196.7 371.4L190.3 369.6zM211.7 366.7L218.1 368.5L216.2 376.9L209.7 375.1zM231.2 372.2L237.7 374.1L236 382.5L229.5 380.6zM251 377.9L257.6 379.7L256.2 388.2L249.5 386.3zM208.5 380.3L215 382.1L213.1 390.7L206.4 388.9zM228.4 385.9L235 387.7L233.3 396.4L226.6 394.5zM165.5 383.2L172 385L169.4 393.7L162.9 391.9zM175.3 385.9L181.8 387.7L179.4 396.5L172.8 394.7zM185.2 388.6L191.7 390.5L189.5 399.3L182.8 397.4zM205.2 394.2L211.8 396.1L209.8 404.9L203.1 403zM246.1 405.6L253 407.5L251.5 416.4L244.6 414.5zM310.1 423.4L317.4 425.4L316.7 434.4L309.4 432.4zM151.3 394.6L157.9 396.4L155.1 405.4L148.5 403.6zM233 417.1L240 419L238.3 428L231.3 426.1zM254.3 422.9L261.3 424.8L260 433.9L252.8 432zM265 425.9L272.2 427.8L270.9 436.9L263.7 435zM297.8 434.9L305.1 436.9L304.3 446L296.9 444zM331.5 444.1L339 446.2L338.6 455.4L331 453.3zM187.8 420.2L194.7 422.1L192.4 431.3L185.5 429.5zM296.4 449.7L303.8 451.7L303 461.1L295.4 459zM319.1 455.9L326.8 457.9L326.2 467.3L318.5 465.2zM162.9 429.5L169.8 431.4L167.2 440.8L160.2 438.9zM194.7 438L201.8 439.9L199.6 449.4L192.4 447.5zM205.5 440.9L212.6 442.8L210.6 452.3L203.4 450.4zM216.3 443.8L223.6 445.8L221.7 455.2L214.4 453.3zM180.1 450.5L187.3 452.4L185 462L177.7 460.1zM191 453.3L198.3 455.3L196.1 464.9L188.7 463zM143.1 457.5L150.3 459.4L147.5 469.3L140.2 467.4zM232.8 480.8L240.5 482.8L238.8 492.8L231.1 490.8zM291.8 496.2L299.7 498.2L298.8 508.2L290.8 506.2zM316 502.5L324.1 504.6L323.5 514.6L315.3 512.5zM160.7 479.2L168.2 481.2L165.6 491.3L158 489.4zM195 488L202.6 490L200.4 500.1L192.7 498.2zM241.8 500L249.7 502L248.2 512.2L240.2 510.2zM302.5 515.5L310.7 517.6L309.9 527.9L301.6 525.8zM327.4 521.9L335.7 524L335.3 534.3L326.9 532.2zM99.7 481.4L107 483.2L103.5 493.5L96.1 491.7zM156.3 495.6L163.9 497.6L161.2 507.9L153.5 506zM179.5 501.5L187.3 503.4L184.9 513.8L177.1 511.9zM191.3 504.5L199.1 506.4L196.9 516.8L189 514.8zM276 525.8L284.3 527.9L283.2 538.3L274.9 536.3zM274.1 542.8L282.5 544.8L281.4 555.5L272.9 553.5z"/><path fill="#34312a" d="M76.3 512.4L83.9 514.2L80.1 525.1L72.4 523.2zM99.6 518.1L107.3 519.9L103.8 530.8L96 528.9zM159.2 532.6L167.3 534.5L164.6 545.4L156.5 543.5zM142.4 547.3L150.5 549.2L147.6 560.4L139.4 558.4zM283.4 581L292.2 583.1L291.2 594.3L282.3 592.2zM63.4 547.9L71.4 549.8L67.4 561.2L59.3 559.3zM100.1 556.5L108.2 558.4L104.7 569.8L96.5 567.9zM112.5 559.4L120.7 561.4L117.4 572.8L109 570.8zM175.7 574.3L184.2 576.3L181.8 587.7L173.2 585.7zM94.2 575L102.6 576.9L99 588.6L90.5 586.7zM132.5 583.8L141 585.8L138 597.5L129.3 595.5zM75.3 591L83.8 592.9L80 604.9L71.4 603zM127.4 602.7L136.1 604.7L133 616.7L124.2 614.7zM95.4 616.2L104.2 618.2L100.6 630.4L91.7 628.5zM108.7 619.2L117.6 621.1L114.2 633.4L105.2 631.4zM276 656.2L285.6 658.3L284.5 670.5L274.8 668.4zM62.3 630.3L71.2 632.2L67.2 644.7L58.1 642.8zM69.3 653.5L78.5 655.5L74.6 668.4L65.3 666.4zM48.6 671.5L57.9 673.4L53.7 686.7L44.2 684.7z"/><path fill="#26251f" d="M87.9 515.2L95.6 517.1L91.9 527.9L84.1 526zM135.1 526.7L143 528.6L140 539.5L132 537.6zM105.8 538.5L113.8 540.4L110.3 551.5L102.3 549.6zM167.2 553.2L175.5 555.2L172.9 566.3L164.5 564.4zM75.5 550.8L83.6 552.6L79.8 564L71.6 562.1zM124.9 562.4L133.2 564.3L130.1 575.7L121.7 573.8zM150.1 568.3L158.5 570.3L155.8 581.7L147.2 579.7zM188.6 577.3L197.2 579.3L194.9 590.8L186.2 588.7zM254.6 592.8L263.4 594.9L262.1 606.3L253.1 604.3zM268 596L277 598.1L275.8 609.5L266.7 607.4zM279.8 617.7L289 619.8L287.9 631.6L278.6 629.5zM101.2 596.8L109.8 598.8L106.3 610.7L97.6 608.8zM55.8 607.5L64.4 609.4L60.3 621.7L51.5 619.7zM122.2 622.1L131.1 624.1L127.9 636.4L118.8 634.4zM163 631.2L172.1 633.2L169.5 645.5L160.3 643.5zM261.5 653L271 655.1L269.8 667.3L260.1 665.2zM48.9 627.4L57.7 629.3L53.5 641.8L44.5 639.9zM89.4 636.1L98.4 638.1L94.7 650.6L85.6 648.7zM144.5 648L153.8 650L150.9 662.6L141.5 660.6zM41.8 647.7L50.9 649.6L46.5 662.5L37.3 660.6zM154 671.4L163.5 673.4L160.8 686.3L151.1 684.3zM120.1 686.3L129.7 688.3L126.5 701.5L116.8 699.5z"/><path fill="#3d382c" d="M111.3 520.9L119.1 522.8L115.8 533.7L107.9 531.8zM147.1 529.6L155.1 531.6L152.3 542.5L144.2 540.5zM208.5 544.6L216.8 546.6L214.8 557.5L206.4 555.5zM192.4 559.2L200.8 561.2L198.6 572.4L190.1 570.4zM119.7 580.8L128.1 582.8L124.9 594.5L116.3 592.5zM145.4 586.8L154 588.8L151.2 600.5L142.5 598.5zM252.1 611.4L261.2 613.5L259.8 625.2L250.6 623.1zM88.2 593.9L96.8 595.8L93.1 607.8L84.4 605.9zM277.9 636.7L287.3 638.8L286.2 650.8L276.7 648.7zM82.1 613.3L90.8 615.2L87.1 627.5L78.2 625.6zM135.7 625.1L144.7 627.1L141.7 639.4L132.6 637.4zM103 639.1L112.1 641L108.6 653.6L99.4 651.6zM130.6 645L139.8 647L136.7 659.6L127.4 657.6zM83.2 656.5L92.5 658.4L88.7 671.3L79.4 669.4zM125.4 665.4L134.8 667.4L131.7 680.3L122.2 678.3zM105.6 683.3L115.2 685.3L111.8 698.5L102.1 696.5zM149.4 692.3L159.1 694.3L156.3 707.5L146.4 705.5z"/><path fill="#2e2b30" d="M123.2 523.8L131 525.7L127.9 536.6L119.9 534.7zM81.8 532.8L89.7 534.6L85.9 545.8L77.9 543.9zM137.5 565.3L145.8 567.3L142.9 578.7L134.4 576.7zM56.7 566.3L64.9 568.2L60.8 579.9L52.5 578zM171.6 592.8L180.3 594.8L177.8 606.5L169 604.5zM184.8 595.8L193.5 597.9L191.2 609.6L182.3 607.5zM37.2 582.4L45.5 584.3L41.1 596.2L32.7 594.3zM49.8 585.2L58.2 587.1L54 599.1L45.5 597.2zM62.5 588.1L71 590L66.9 602L58.4 600.1zM167.3 611.8L176.2 613.8L173.7 625.8L164.7 623.7zM180.8 614.8L189.8 616.8L187.4 628.8L178.3 626.8zM263.7 633.5L273.1 635.6L271.8 647.6L262.4 645.5zM42.8 604.6L51.4 606.5L47 618.8L38.3 616.9zM62.7 674.4L72.1 676.4L68.1 689.6L58.5 687.6zM76.9 677.4L86.4 679.3L82.5 692.5L73 690.6zM134.7 689.3L144.4 691.3L141.3 704.5L131.5 702.5z"/><path fill="#4a4030" d="M171.4 535.6L179.5 537.5L177 548.4L168.8 546.4zM183.7 538.5L191.8 540.5L189.5 551.4L181.2 549.4zM196 541.6L204.3 543.6L202.1 554.5L193.8 552.5zM130.1 544.3L138.2 546.3L135.1 557.4L126.9 555.5zM162.9 571.3L171.3 573.3L168.7 584.7L160.2 582.7zM69.1 569.2L77.4 571.1L73.4 582.8L65.1 580.9zM81.6 572.1L89.9 574L86.2 585.7L77.8 583.7zM106.9 577.9L115.3 579.8L111.9 591.5L103.4 589.6zM265.9 614.5L275 616.6L273.8 628.4L264.6 626.3zM158.6 651.1L167.9 653.1L165.2 665.7L155.8 663.6zM97.2 659.4L106.5 661.4L102.9 674.3L93.5 672.3zM91.3 680.3L100.7 682.3L97.1 695.5L87.5 693.5z"/><path fill="#7fc8bd" d="M221 547.6L229.4 549.7L227.5 560.6L219.1 558.6zM285.1 563.3L293.8 565.4L292.8 576.3L284.1 574.2zM227.9 586.5L236.7 588.6L234.9 600L226.1 598zM211.4 602L220.3 604L218.4 615.7L209.4 613.7zM172.7 654.1L182 656.1L179.5 668.7L170.1 666.7zM182.9 677.6L192.6 679.6L190.2 692.5L180.5 690.4zM193.9 701.5L203.8 703.5L201.6 716.7L191.5 714.7zM224 707.7L234 709.8L232.3 722.9L222.1 720.9zM144.6 713.7L154.5 715.7L151.6 729.2L141.6 727.2zM174.8 719.8L184.9 721.8L182.4 735.3L172.2 733.3zM205.5 725.9L215.6 728L213.6 741.5L203.3 739.4zM220.9 729L231.2 731.1L229.3 744.6L219 742.5zM217.7 750.9L228.2 752.9L226.3 766.7L215.7 764.7zM150.5 761L160.9 763L158.1 777.2L147.5 775.2zM166.3 764L176.9 766L174.3 780.2L163.6 778.2zM182.3 767.1L192.9 769.1L190.5 783.2L179.8 781.2zM198.3 770.1L209 772.2L206.9 786.3L196.1 784.3z"/><path fill="#56b6ad" d="M233.7 550.7L242.1 552.8L240.4 563.7L231.9 561.6zM259.2 556.9L267.7 559L266.4 570L257.8 567.9zM338.2 576.2L347.1 578.3L346.8 589.3L337.8 587.1zM217.9 565.3L226.4 567.4L224.6 578.6L215.9 576.5zM256.9 574.7L265.6 576.7L264.3 587.9L255.5 585.9zM194.4 617.9L203.4 619.9L201.2 631.9L192.1 629.9zM176.8 634.2L186 636.3L183.5 648.5L174.2 646.5zM190.7 637.3L199.9 639.3L197.7 651.6L188.3 649.6zM218.7 643.5L228.1 645.6L226.2 657.8L216.8 655.8zM168.4 674.5L178 676.5L175.5 689.4L165.8 687.4zM178.9 698.4L188.8 700.4L186.4 713.6L176.4 711.6z"/><path fill="#3fa3a2" d="M246.4 553.8L254.8 555.9L253.4 566.8L244.8 564.8zM272.1 560.1L280.7 562.2L279.6 573.1L270.9 571zM324.8 572.9L333.6 575.1L333.1 586L324.2 583.9zM205.1 562.3L213.5 564.3L211.5 575.5L203 573.4zM235.7 627.2L244.9 629.3L243.3 641.3L234 639.2zM247.2 649.8L256.6 651.9L255.2 664.2L245.6 662.1zM230 666.5L239.6 668.6L237.9 681.2L228.2 679.1zM244.6 669.7L254.2 671.8L252.7 684.3L242.9 682.2zM212.3 683.7L222 685.8L220.1 698.7L210.2 696.6zM201.9 747.8L212.4 749.8L210.3 763.6L199.7 761.6z"/><path fill="#4aaea8" d="M298.2 566.4L306.9 568.6L306.2 579.5L297.3 577.4zM241.2 589.7L250 591.7L248.5 603.2L239.5 601.1zM221.9 624.1L231 626.1L229.2 638.1L219.9 636.1zM232.9 646.6L242.3 648.7L240.6 661L231.1 658.9zM186.9 657.2L196.3 659.2L194 671.8L184.4 669.8zM201.1 660.3L210.6 662.3L208.5 674.9L198.9 672.8zM197.6 680.6L207.2 682.7L205.1 695.6L195.3 693.5zM164.1 695.3L173.9 697.4L171.3 710.5L161.4 708.5zM239.2 710.8L249.3 712.9L247.7 726.1L237.5 724zM139.7 735.6L149.9 737.6L146.9 751.4L136.6 749.4z"/><path fill="#39989c" d="M311.5 569.7L320.2 571.8L319.6 582.8L310.7 580.6zM243.8 571.5L252.5 573.6L250.9 584.8L242.2 582.7zM201.6 580.4L210.3 582.4L208.2 593.8L199.4 591.8zM198.1 598.9L206.9 600.9L204.8 612.6L195.8 610.6zM224.9 605.1L233.9 607.1L232.1 618.9L223 616.8zM208.1 621L217.2 623L215.2 635L206 633zM190.1 722.8L200.2 724.9L198 738.4L187.7 736.3z"/><path fill="#2a2926" d="M69.9 529.9L77.7 531.8L73.8 542.9L65.9 541zM93.7 535.6L101.7 537.5L98.1 548.6L90 546.7zM117.9 541.4L125.9 543.3L122.7 554.5L114.5 552.5zM154.7 550.2L162.9 552.2L160.2 563.3L151.9 561.4zM179.7 556.2L188.1 558.2L185.7 569.4L177.2 567.4zM87.8 553.6L95.9 555.5L92.2 566.9L84 565zM281.6 599.2L290.6 601.3L289.6 612.7L280.5 610.6zM158.5 589.8L167.1 591.8L164.4 603.5L155.7 601.5zM114.2 599.8L122.9 601.7L119.6 613.7L110.8 611.7zM140.6 605.7L149.4 607.7L146.5 619.7L137.6 617.7zM153.9 608.7L162.8 610.7L160 622.7L151.1 620.7zM249.7 630.4L258.9 632.4L257.5 644.4L248.1 642.3zM68.9 610.4L77.6 612.3L73.6 624.6L64.8 622.6zM149.3 628.2L158.3 630.1L155.5 642.4L146.4 640.4zM75.8 633.2L84.7 635.1L80.9 647.7L71.8 645.7zM116.8 642L125.9 644L122.6 656.6L113.4 654.6zM55.5 650.6L64.6 652.6L60.5 665.4L51.3 663.5zM111.3 662.4L120.6 664.4L117.3 677.3L107.8 675.3zM139.7 668.4L149.1 670.4L146.2 683.3L136.6 681.3zM41.5 692.9L51 694.9L46.7 708.4L37 706.5z"/><path fill="#6cc0b4" d="M230.8 568.4L239.4 570.5L237.7 581.7L229 579.6zM270.1 577.8L278.9 579.9L277.7 591.1L268.8 589zM214.7 583.4L223.4 585.5L221.5 596.9L212.7 594.9zM238.5 608.2L247.5 610.3L245.9 622L236.8 619.9zM204.7 640.4L213.9 642.4L211.9 654.7L202.5 652.7zM215.5 663.4L225.1 665.5L223.2 678L213.5 676zM227 686.9L236.9 689L235.1 701.8L225.2 699.7zM241.9 690L251.8 692.1L250.3 705L240.3 702.9zM208.9 704.6L218.9 706.6L216.9 719.8L206.8 717.8zM159.7 716.7L169.7 718.7L167 732.2L156.9 730.2zM236.5 732.2L246.8 734.2L245.2 747.7L234.7 745.6zM155.1 738.6L165.3 740.6L162.6 754.4L152.2 752.4zM170.6 741.6L180.9 743.7L178.4 757.5L168 755.5zM186.2 744.7L196.6 746.7L194.3 760.5L183.8 758.5zM233.6 754L244.2 756L242.5 769.8L231.8 767.8z"/><path fill="#5a4030" d="M296.8 584.2L305.7 586.3L304.8 597.5L295.8 595.4zM337.5 594L346.6 596.1L346.3 607.4L337.1 605.2zM309 605.6L318.2 607.7L317.5 619.2L308.2 617.1zM322.9 608.9L332.1 611L331.6 622.5L322.3 620.3zM336.8 612.1L346.1 614.3L345.8 625.8L336.4 623.6z"/><path fill="#4a3a30" d="M310.2 587.4L319.2 589.6L318.6 600.8L309.5 598.6zM292.1 639.9L301.6 642.1L300.7 654.1L291.1 651.9zM320.9 646.4L330.5 648.6L330 660.6L320.3 658.4z"/><path fill="#7a5030" d="M323.8 590.7L332.8 592.8L332.4 604.1L323.2 601.9zM293.7 620.9L303 623.1L302.1 634.8L292.7 632.7zM307.8 624.2L317.1 626.3L316.4 638.1L307 635.9zM336.2 630.7L345.6 632.9L345.3 644.6L335.7 642.5zM335.5 649.7L345.1 651.9L344.8 663.9L335 661.7z"/><path fill="#3a3028" d="M295.3 602.4L304.3 604.5L303.5 616L294.3 613.8zM321.9 627.4L331.3 629.6L330.8 641.3L321.3 639.2zM306.5 643.2L316 645.3L315.3 657.3L305.7 655.2z"/>
<rect x="-90" y="150" width="440" height="660" fill="url(#glow)" opacity=".35"/>
<rect x="250" y="540" width="100" height="130" fill="url(#glow2)"/>
</g>
</g>
</svg><!--BLD1-->
<div id="win">
<div id="sim">
<div id="simtop"></div>
<div id="simbot"></div>

<div id="simtxt1" class="abs" style="left:12px;top:10.500px;font-size:11px;color:#b0b0b0;white-space:nowrap;line-height:16px;letter-spacing:-.02px">iPhone 12/13 mini 100% 16<span class="caret" style="margin-left:3.500px"></span></div>
<div id="simtxt2" class="abs" style="left:178px;top:10px;font-size:11.500px;color:#b4b4b4;white-space:nowrap;line-height:16px;letter-spacing:-.3px">热重载 开<span class="caret" style="margin-left:2px"></span></div>
<svg class="abs" style="left:350px;top:9px" width="140" height="20" viewBox="0 0 140 20" fill="none" stroke="#a0a0a0" stroke-width="1.2">
<path d="M4.6 7.2A6.2 6.2 0 0 1 16.2 9.8M15.4 13.4A6.2 6.2 0 0 1 3.8 10.8"/><path d="M13.9 9.3l2.3 3.2l2.300 -3.200zM6.1 11.3l-2.3 -3.2l-2.300 3.200z" fill="#a0a0a0" stroke="none"/>
<circle cx="50" cy="10" r="6.6"/><rect x="47.3" y="7.3" width="5.4" height="5.4" fill="#a0a0a0" stroke="none"/>
<rect x="85.5" y="3.5" width="9" height="13" rx="1"/><path d="M88.5 14h3"/>
<path d="M123.700 8h10.500v7.500h-10.500zM126.700 8v-3.200h10.800v7.700h-3.300"/>
</svg>
<div id="phone">
 <div id="nav">
  <div id="notch"></div>
  <div class="abs" style="left:10px;top:17px;font-size:12px;font-weight:bold;color:#fff;letter-spacing:-.6px">15:38</div>
  <div class="abs" style="left:310px;top:19px;font-size:11px;font-weight:bold;color:#fff;letter-spacing:-.2px">100%</div>
  <svg class="abs" style="left:341px;top:19px" width="28" height="12" viewBox="0 0 28 12"><rect x="1" y="1" width="22" height="9.500" rx="1.5" fill="none" stroke="#fff" stroke-width="1.1"/><rect x="2.700" y="2.700" width="18.600" height="6.100" rx=".5" fill="#fff"/><rect x="24.200" y="3.800" width="1.600" height="4" rx=".8" fill="#fff"/></svg>
  <svg class="abs" style="left:8px;top:60px" width="14" height="22" viewBox="0 0 14 22"><path d="M11 3L3 11L11 19" fill="none" stroke="#fff" stroke-width="2.200"/></svg>
  <div class="abs" style="left:0;top:60px;width:375px;text-align:center;font-size:13px;font-weight:500;color:#fff;line-height:18px">弹窗提醒</div>
  <div id="capsule"><svg width="85" height="30" viewBox="0 0 85 30"><circle cx="12.400" cy="15.600" r="2.300" fill="#fff"/><circle cx="21" cy="15.600" r="3.300" fill="#fff"/><circle cx="29.500" cy="15.600" r="2.300" fill="#fff"/><path d="M42.200 7.500v15.500" stroke="#c9b0c6" stroke-width="1"/><circle cx="63.400" cy="15.600" r="7.200" fill="none" stroke="#fff" stroke-width="2"/><circle cx="63.400" cy="15.600" r="3" fill="#fff"/></svg></div>
 </div>
 <div class="lbl" style="left:74px;top:126px">标题</div>
 <div class="abs" style="left:124px;top:115px;width:56px;height:40px;background:#ade0ee;color:#fff;font-size:14px;line-height:40px;white-space:nowrap;overflow:hidden">复习提醒</div>
 <div class="abs" style="left:171px;top:121px;width:24px;height:24px;border-radius:50%;background:radial-gradient(circle,rgba(128,128,128,.95) 0,rgba(128,128,128,.92) 62%,rgba(128,128,128,0) 100%)"></div>
 <div class="dot" style="top:157px"></div>
 <div class="lbl" style="left:74px;top:187px">类型</div>
 <div class="abs" style="left:112px;top:187px;font-size:14px;line-height:18px;color:#9a9a9a">私人</div>
 <div class="dot" style="top:218px"></div>
 <div class="abs" style="left:124px;top:248px;font-size:14px;line-height:18px;color:#808080">简介</div>
 <div class="lbl" style="left:74px;top:300px">简介</div>
 <div class="dot" style="top:383px"></div>
 <div class="abs" style="left:124px;top:404px;font-size:14px;line-height:18px;color:#111">请选择时间</div>
 <div class="lbl" style="left:46px;top:413px">提醒时间</div>
 <div class="dot" style="top:444px"></div>
 <div id="editor">
  <div class="abs ic" style="left:9px;top:2.500px;font:21px/26px 'Liberation Sans',sans-serif;-webkit-text-stroke:.55px #8c8c8c">B</div>
  <div class="abs ic" style="left:50.500px;top:1px;font:italic 26px/28px 'Liberation Serif',serif">I</div>
  <div class="abs ic" style="left:89px;top:2px;font:21px/24px 'Liberation Sans',sans-serif;"><span style="text-decoration:underline;text-decoration-thickness:1.200px;text-underline-offset:2.500px">U</span></div>
  <svg class="abs" style="left:129px;top:8px" width="19" height="16" viewBox="0 0 19 16"><path d="M1 1h11v2.800h-3.800v8.200h-3.400v-8.200h-3.800z" fill="#8c8c8c"/><rect x="0" y="12.500" width="9" height="2.400" fill="#8c8c8c"/><path d="M11 8.500l6 6M17 8.500l-6 6" stroke="#8c8c8c" stroke-width="2.300"/></svg>
  <svg class="abs" style="left:168.500px;top:8px" width="19" height="15" viewBox="0 0 20 16"><rect x=".7" y=".7" width="18.600" height="14.600" fill="none" stroke="#9a9a9a" stroke-width="1.400"/><path d="M2.500 13.500v-3.500l4-4.500l3 3.500l2.500-1.500l5.500 3.500v2.500z" fill="#8c8c8c"/><circle cx="15.200" cy="4.300" r="1.200" fill="#8c8c8c"/></svg>
  <svg class="abs" style="left:210px;top:6px" width="18" height="20" viewBox="0 0 18 20" fill="none" stroke="#9a9a9a"><path d="M1 4h16" stroke-width="1.600"/><path d="M5.500 3.500v-2h7v2" stroke-width="1.400"/><path d="M2.500 4.500l1.300 13.500h10.400l1.300-13.500" stroke-width="1.500"/><path d="M7.200 6.500v9M10.800 6.500v9" stroke-width="1.300"/></svg>
  <div class="abs" style="left:10px;top:43px;font-size:14px;font-style:italic;color:#8c8c8c;line-height:20px;white-space:nowrap;letter-spacing:1.6px">开始输入...</div>
 </div>
 <div class="lbl" style="left:59px;top:590px">内容</div>
 <div class="dot" style="top:732px"></div>
 <div class="abs" style="left:128px;top:753px;width:100px;height:40px;border-radius:3px;background:#c898c6;border:1px solid #c190bf;color:#fff;font-size:14px;line-height:38px;text-align:center">提交</div>
 <div class="abs" style="left:131px;top:798px;width:112px;height:5.500px;border-radius:3px;background:#0a0a0a"></div>
</div>
<div class="abs" style="left:8px;top:889px;font-size:12px;line-height:16px;color:#b8b8b8;white-space:nowrap">页面路径 <span class="caret"></span></div>
<div class="abs" style="left:75px;top:889px;width:1px;height:15px;background:#555"></div>
<div class="abs" style="left:83px;top:889px;font-size:12px;line-height:16px;color:#b0b0b0;white-space:nowrap;letter-spacing:.14px">pages/popupRemind/update-and-add</div>
<svg class="abs" style="left:292px;top:890px" width="14" height="14" viewBox="0 0 14 14" fill="none" stroke="#aaa" stroke-width="1.100"><path d="M3.500 3.500h8.500v9h-8.500z"/><path d="M1.500 10.500v-9h8"/></svg>
<svg class="abs" style="left:408px;top:888px" width="84" height="18" viewBox="0 0 84 18" fill="none" stroke="#a0a0a0" stroke-width="1.100"><ellipse cx="10.500" cy="10.800" rx="4.300" ry="5.400"/><path d="M10.500 5.400v10.800" stroke-width="1.500"/><path d="M8.300 5.700a2.300 2.300 0 0 1 4.400 0"/><path d="M6.500 8.500l-2.700-2M14.500 8.500l2.700-2M6.200 11h-3M14.800 11h3M6.600 13.800l-2.600 2.200M14.400 13.800l2.600 2.200"/><path d="M35.500 10c3.500-5.700 13.500-5.700 17 0c-3.500 5.700-13.500 5.700-17 0z"/><circle cx="44" cy="10" r="2.400"/><circle cx="71" cy="10" r="1" fill="#a8a8a8" stroke="none"/><circle cx="76" cy="10" r="1" fill="#a8a8a8" stroke="none"/><circle cx="81" cy="10" r="1" fill="#a8a8a8" stroke="none"/></svg>

</div>
<div id="exp"><div id="expin">

<div class="abs" style="left:0;top:0;width:198px;height:2px;background:#464646"></div>
<div class="abs" style="left:-1px;top:2px;width:199px;height:31px;background:#333"></div>
<svg class="abs" style="left:5px;top:8px" width="180" height="22" viewBox="0 0 180 22" fill="none" stroke="#858585" stroke-width="1.200">
<path d="M7 2.500h5l3 3v8.500h-8z" stroke="#fff" stroke-width="1.300"/><path d="M7 6h-3.500v12h8v-3.500" stroke="#fff" stroke-width="1.300"/>
<g transform="translate(2.500 0)"><circle cx="41" cy="8" r="4.600"/><path d="M38 11.500l-5.500 6.500"/></g>
<g transform="translate(2.500 0)"><circle cx="67.500" cy="4.500" r="1.900"/><circle cx="67.500" cy="16" r="1.900"/><circle cx="75.500" cy="7.500" r="1.900"/><path d="M67.500 6.400v7.700M75.500 9.400c0 3-8 2-8 4.700"/></g>
<path d="M98.500 7.500h6v6h6v5.500h-12zM104.500 13.500v5.500M98.500 13.500h6M107.500 3h5.500v5.500h-5.500z"/>
<path transform="translate(1 0)" d="M131.500 5h12.500v13.500h-12.500zM135 5v4.500h7.500M140.500 18.500v-5.500h-6.500"/>
<path d="M160 10.500h13.500c1-1.500.8-3 .3-4c1 .5 1.500 1.300 1.700 2.200c1-.3 2-.1 2.800.4c-.7 1.300-1.800 1.700-3 1.700c-1.200 3.500-4 5.200-8 5.200c-4.500 0-6.800-2-7.300-5.500z" fill="#858585" stroke="none"/><path d="M162 9.500h9.500M164 7.500h6M167.500 5.500h2.500" stroke-width="1.800"/>
</svg>
<div class="abs" style="left:19px;top:44px;font-size:11px;line-height:15px;color:#c8c8c8">资源管理器</div>
<svg class="abs" style="left:166px;top:47px" width="14" height="6" viewBox="0 0 14 6"><circle cx="2" cy="3" r="1" fill="#ccc"/><circle cx="7" cy="3" r="1" fill="#ccc"/><circle cx="12" cy="3" r="1" fill="#ccc"/></svg>
<div class="abs" style="left:-1px;top:68px;width:199px;height:44px;background:#383838"></div>
<span class="abs tw" style="left:7.500px;top:75.500px"></span>
<div class="abs" style="left:19px;top:71px;font-size:11px;font-weight:bold;line-height:16px;color:#c8c8c8">打开的编辑器</div>
<span class="abs twd" style="left:6.500px;top:99px"></span>
<div class="abs" style="left:19px;top:93px;font-size:11px;font-weight:bold;line-height:16px;color:#c8c8c8">MP-WEIXIN</div>
<div class="row" style="top:113px"><span class="tw"></span><svg class="fi" width="16" height="16" viewBox="0 0 16 16"><path d="M1 3.200a1 1 0 0 1 1-1h4l1.500 1.600h6.500a1 1 0 0 1 1 1v7.400a1 1 0 0 1-1 1h-12a1 1 0 0 1-1-1z" fill="#e8b730"/><rect x="8.500" y="7" width="7" height="6.500" fill="#e8b730"/><path d="M10 8.300v4.200M13 8.300v4.200M8.800 9.500h6M8.800 11.500h6" stroke="#fff" stroke-width=".9"/></svg><span class="fn">api</span></div>
<div class="row" style="top:135px"><span class="tw"></span><svg class="fi" width="16" height="16" viewBox="0 0 16 16"><path d="M1 3.200a1 1 0 0 1 1-1h4l1.500 1.600h6.500a1 1 0 0 1 1 1v7.400a1 1 0 0 1-1 1h-12a1 1 0 0 1-1-1z" fill="#90a4ae"/></svg><span class="fn">component</span></div>
<div class="row" style="top:157px"><span class="tw"></span><svg class="fi" width="16" height="16" viewBox="0 0 16 16"><path d="M1 3.200a1 1 0 0 1 1-1h4l1.500 1.600h6.500a1 1 0 0 1 1 1v7.400a1 1 0 0 1-1 1h-12a1 1 0 0 1-1-1z" fill="#90a4ae"/></svg><span class="fn">miniprogram</span></div>
<div class="row" style="top:179px"><span class="tw"></span><svg class="fi" width="16" height="16" viewBox="0 0 16 16"><path d="M1 3.200a1 1 0 0 1 1-1h4l1.500 1.600h6.500a1 1 0 0 1 1 1v7.400a1 1 0 0 1-1 1h-12a1 1 0 0 1-1-1z" fill="#e8604c"/><rect x="8" y="6.500" width="7.500" height="7.500" rx="1" fill="#f6c9c2"/><path d="M10.800 8.800l-1.300 1.500l1.300 1.500M12.700 8.800l1.300 1.500l-1.300 1.500" stroke="#e8604c" stroke-width=".9" fill="none"/></svg><span class="fn">pages</span></div>
<div class="row" style="top:201px"><span class="tw"></span><svg class="fi" width="16" height="16" viewBox="0 0 16 16"><path d="M1 3.200a1 1 0 0 1 1-1h4l1.500 1.600h6.500a1 1 0 0 1 1 1v7.400a1 1 0 0 1-1 1h-12a1 1 0 0 1-1-1z" fill="#f2c230"/><rect x="9" y="6.500" width="6.500" height="7.500" rx="1" fill="#fff3c4"/><path d="M10.300 8.500h4M10.300 10.200h4M10.300 11.900h4" stroke="#e0a800" stroke-width=".8"/></svg><span class="fn">static</span></div>
<div class="row" style="top:223px"><span class="tw"></span><svg class="fi" width="16" height="16" viewBox="0 0 16 16"><path d="M1 3.200a1 1 0 0 1 1-1h4l1.500 1.600h6.500a1 1 0 0 1 1 1v7.400a1 1 0 0 1-1 1h-12a1 1 0 0 1-1-1z" fill="#7cb342"/><rect x="8" y="6.500" width="7.500" height="7.500" rx="1.500" fill="#e8f5d8"/><path d="M11.750 8v4.500M9.500 10.250h4.500" stroke="#5a9a2a" stroke-width="1.300"/></svg><span class="fn">utils</span></div>
<div class="row" style="top:245px"><svg class="fi" width="16" height="16" viewBox="0 0 16 16"><path d="M8 1.600l5.800 3.350v6.700l-5.800 3.350l-5.800-3.350v-6.700z" fill="#4b4fae"/><path d="M8 4.800l3 1.750v3.500l-3 1.750l-3-1.750v-3.500z" fill="#a9adec"/></svg><span class="fn" style="letter-spacing:-.25px">.eslintrc.js</span></div>
<div class="row" style="top:267px"><svg class="fi" width="16" height="16" viewBox="0 0 16 16"><rect x="2" y="2" width="12.500" height="12.500" fill="#f1cf3a"/><text x="6.300" y="13" font-family="Liberation Sans,sans-serif" font-size="6" font-weight="bold" fill="#3a3a2a">JS</text></svg><span class="fn">app.js</span></div>
<div class="row" style="top:289px"><svg class="fi" width="17" height="16" viewBox="0 0 17 16" fill="none" stroke="#e8c040" stroke-width="1.300"><path d="M4.500 2.500c-2 0-2 1-2 2.500s0 2.500-1.500 3c1.500.5 1.500 1.500 1.500 3s0 2.500 2 2.500"/><path d="M12.500 2.500c2 0 2 1 2 2.500s0 2.500 1.500 3c-1.500.5-1.500 1.500-1.500 3s0 2.500-2 2.500"/><path d="M6 10.500h1M8 10.500h1M10 10.500h1" stroke-width="1.200"/></svg><span class="fn">app.json</span></div>
<div class="row" style="top:311px"><svg class="fi" width="16" height="16" viewBox="0 0 16 16"><path d="M2 2h12.500l-1.200 10.300l-5 1.700l-5-1.700l-.5-3.800h2.400l.2 2l2.900.9l2.900-.9l.3-3h-9l-.3-2.300h9.600l.2-1.100h-9.700z" fill="#42a5e0"/></svg><span class="fn" style="letter-spacing:-.3px">app.wxss</span></div>
<div class="row" style="top:333px"><svg class="fi" width="16" height="16" viewBox="0 0 16 16"><rect x="2" y="2" width="12.500" height="12.500" fill="#f1cf3a"/><text x="6.300" y="13" font-family="Liberation Sans,sans-serif" font-size="6" font-weight="bold" fill="#3a3a2a">JS</text></svg><span class="fn">config.js</span></div>
<div class="row" style="top:355px"><svg class="fi" width="17" height="16" viewBox="0 0 17 16" fill="none" stroke="#e8c040" stroke-width="1.300"><path d="M4.500 2.500c-2 0-2 1-2 2.500s0 2.500-1.500 3c1.500.5 1.500 1.500 1.500 3s0 2.500 2 2.500"/><path d="M12.500 2.500c2 0 2 1 2 2.500s0 2.500 1.500 3c-1.500.5-1.500 1.500-1.500 3s0 2.500-2 2.500"/><path d="M6 10.500h1M8 10.500h1M10 10.500h1" stroke-width="1.200"/></svg><span class="fn">project.config.json</span></div>
<div class="row" style="top:377px"><svg class="fi" width="17" height="16" viewBox="0 0 17 16" fill="none" stroke="#e8c040" stroke-width="1.300"><path d="M4.500 2.500c-2 0-2 1-2 2.500s0 2.500-1.500 3c1.500.5 1.500 1.500 1.500 3s0 2.500 2 2.500"/><path d="M12.500 2.500c2 0 2 1 2 2.500s0 2.500 1.500 3c-1.500.5-1.500 1.500-1.500 3s0 2.500-2 2.500"/><path d="M6 10.500h1M8 10.500h1M10 10.500h1" stroke-width="1.200"/></svg><span class="fn" style="letter-spacing:-.22px">project.private.config.js...</span></div>
<div class="row" style="top:399px"><svg class="fi" width="17" height="16" viewBox="0 0 17 16" fill="none" stroke="#e8c040" stroke-width="1.300"><path d="M4.500 2.500c-2 0-2 1-2 2.500s0 2.500-1.500 3c1.500.5 1.500 1.500 1.500 3s0 2.500 2 2.500"/><path d="M12.500 2.500c2 0 2 1 2 2.500s0 2.500 1.500 3c-1.500.5-1.500 1.500-1.500 3s0 2.500-2 2.500"/><path d="M6 10.500h1M8 10.500h1M10 10.500h1" stroke-width="1.200"/></svg><span class="fn">sitemap.json</span></div>
<div class="abs" style="left:-1px;top:866px;width:199px;height:45px;background:#383838"></div>
<span class="abs tw" style="left:7.500px;top:873.500px"></span>
<div class="abs" style="left:19px;top:869px;font-size:11px;font-weight:bold;line-height:16px;color:#c8c8c8">大纲</div>
<svg class="abs" style="left:14px;top:890px" width="56" height="15" viewBox="0 0 56 15" fill="none" stroke="#b0b0b0" stroke-width="1"><circle cx="7" cy="7.500" r="5.700"/><path d="M4.800 5.300l4.400 4.400M9.200 5.300l-4.400 4.400"/><path d="M34.500 2l5.700 10.500h-11.400z"/><path d="M34.500 5.500v4M34.500 10.500v1.200"/></svg>
<div class="abs" style="left:31px;top:891px;font-size:12px;line-height:15px;color:#b0b0b0">0</div>
<div class="abs" style="left:58px;top:891px;font-size:12px;line-height:15px;color:#b0b0b0">0</div>

</div></div>
<div id="dbg">

<div class="abs" style="left:0;top:0;width:550px;height:2px;background:#464646"></div>
<div class="abs" style="left:0;top:2px;width:550px;height:71px;background:#2d2d2d"></div>
<div class="abs" style="left:0;top:73px;width:550px;height:1px;background:#3c3c3c"></div>
<div class="abs" style="left:0;top:74px;width:550px;height:29px;background:#2f2f2f"></div>
<div class="abs ptab" style="left:21px;color:#f0f0f0">调试器</div>
<div class="abs" style="left:21px;top:101px;width:33px;height:1px;background:#e8e8e8"></div>
<div class="abs" style="left:62px;top:80px;width:27px;height:18px;border-radius:9px;background:#404040;color:#ddd;font-size:11px;line-height:18px;text-align:center">238</div>
<div class="abs ptab" style="left:110px">问题</div>
<div class="abs ptab" style="left:152px">输出</div>
<div class="abs ptab" style="left:193px">终端</div>
<div class="abs ptab" style="left:235px">代码质量</div>
<svg class="abs" style="left:484px;top:84px" width="46" height="14" viewBox="0 0 46 14" fill="none" stroke="#d0d0d0" stroke-width="1.300"><path d="M2.500 9.500l4.500-4.500l4.500 4.500"/><path d="M35 3l8 8M43 3l-8 8"/></svg>
<!-- devtools tab bar -->
<div class="abs" style="left:0;top:103px;width:550px;height:26px;background:#292929"></div>
<div class="abs" style="left:0;top:129px;width:550px;height:1px;background:#3d3d3d"></div>
<svg class="abs" style="left:10px;top:108px" width="17" height="17" viewBox="0 0 17 17" fill="none"><path d="M6.500 12.500h-5v-11h11v4.500" stroke="#9a9a9a" stroke-width="1.200"/><path d="M6.500 6l2.700 9l1.700-3.300l3.300 3.300l1.300-1.300l-3.300-3.300l3.300-1.700z" fill="#9a9a9a"/></svg>
<div class="abs" style="left:35px;top:107px;width:1px;height:18px;background:#3a3a3a"></div>
<div class="abs" style="left:42px;top:103px;width:54px;height:26px;background:#000"></div>
<div class="abs dtab" style="left:54px;color:#fff">Wxml</div>
<div class="abs dtab" style="left:107px">Console</div>
<div class="abs dtab" style="left:173px">Sources</div>
<div class="abs dtab" style="left:238px">Network</div>
<svg class="abs" style="left:304px;top:111px" width="12" height="10" viewBox="0 0 12 10" fill="none" stroke="#b0b0b0" stroke-width="1.200"><path d="M1 1l4 4l-4 4M6 1l4 4l-4 4"/></svg>
<svg class="abs" style="left:387.500px;top:111px" width="11.500" height="10.500" viewBox="0 0 13 12"><path d="M6.500 .5l6 11h-12z" fill="#f2c12e"/><path d="M6.500 4v4M6.500 9v1.300" stroke="#fff" stroke-width="1.300"/></svg>
<div class="abs dtab" style="left:401px;color:#ddd">238</div>
<svg class="abs" style="left:426px;top:111px" width="10" height="10" viewBox="0 0 10 10"><path d="M0 0h9v6.500h-5l-2.500 2.500v-2.500h-1.500z" fill="#3b82f0"/><path d="M2 2h5.500M2 4h4" stroke="#cfe0ff" stroke-width=".9"/></svg>
<div class="abs dtab" style="left:439px;color:#ddd">56</div>
<div class="abs" style="left:459px;top:107px;width:1px;height:18px;background:#3a3a3a"></div>
<svg class="abs" style="left:468px;top:107.500px" width="18" height="18" viewBox="0 0 16 16"><path d="M6.800 .8h2.400l.4 2a5.400 5.400 0 0 1 1.400.8l1.900-.7l1.200 2.100l-1.500 1.300a5.400 5.400 0 0 1 0 1.600l1.500 1.300l-1.200 2.100l-1.900-.7a5.400 5.400 0 0 1-1.400.8l-.4 2h-2.400l-.4-2a5.400 5.400 0 0 1-1.400-.8l-1.900.7l-1.200-2.100l1.500-1.300a5.400 5.400 0 0 1 0-1.600l-1.500-1.300l1.200-2.100l1.900.7a5.400 5.400 0 0 1 1.400-.8z" fill="#a8a8a8"/><circle cx="8" cy="8" r="2.300" fill="#2b2b2b"/></svg>
<svg class="abs" style="left:503px;top:109px" width="4" height="15" viewBox="0 0 4 15" fill="#a8a8a8"><circle cx="2" cy="2" r="1.400"/><circle cx="2" cy="7.500" r="1.400"/><circle cx="2" cy="13" r="1.400"/></svg>
<svg class="abs" style="left:524px;top:108px" width="18" height="16" viewBox="0 0 18 16" fill="none" stroke="#8a8a8a" stroke-width="2.100"><path d="M5.500 2h11v9h-11z"/><path d="M2 5.500v9h11"/></svg>
<!-- elements tree -->
<pre class="abs code" style="left:15px;top:134px"><span class="tg">&lt;page&gt;</span>
  <span class="tg" style="margin-left:-2px">&lt;view </span><span class="an">class</span><span class="tg">="</span><span class="av">update-container</span><span class="tg">"&gt;</span><span style="color:#ddd">…</span><span class="tg">&lt;/view&gt;</span>
<span class="tg">&lt;/page&gt;</span></pre>
<span class="abs" style="left:18px;top:154px;width:0;height:0;border-top:3.500px solid transparent;border-bottom:3.500px solid transparent;border-left:5px solid #a0a0a0"></span>
<div class="abs" style="left:0;top:335px;width:550px;height:1px;background:#454545"></div>
<div class="abs" style="left:0;top:336px;width:550px;height:22px;background:#272727"></div>
<div class="abs" style="left:0;top:358px;width:550px;height:1px;background:#454545"></div>
<div class="abs" style="left:0;top:359px;width:550px;height:26px;background:#2b2b2b"></div>
<div class="abs" style="left:1px;top:359px;width:50px;height:26px;background:#000"></div>
<div class="abs dtab" style="left:10px;top:365px;color:#fff">Styles</div>
<div class="abs dtab" style="left:60px;top:365px">Computed</div>
<div class="abs dtab" style="left:136px;top:365px">Dataset</div>
<div class="abs dtab" style="left:196px;top:365px">Component Data</div>
<div class="abs dtab" style="left:306px;top:365px">Scope Data</div>
<div class="abs" style="left:0;top:385px;width:550px;height:1px;background:#3d3d3d"></div>
<div class="abs" style="left:3px;top:388px;width:472px;height:22px;background:#2a2a2a"></div>
<div class="abs" style="left:8px;top:393px;font-size:12px;line-height:15px;color:#8a8a8a">Filter</div>
<div class="abs" style="left:488px;top:392px;font:bold 11px/15px 'Liberation Mono',monospace;color:#d0d0d0">.cls</div>
<svg class="abs" style="left:527px;top:393px" width="14" height="14" viewBox="0 0 14 14"><path d="M6 1v10M1 6h10" stroke="#6a6a6a" stroke-width="1.200"/><path d="M13.500 10v3.500h-3.500z" fill="#555"/></svg>
<div class="abs" style="left:0;top:411px;width:550px;height:1px;background:#3d3d3d"></div>
<!-- console drawer -->
<div class="abs" style="left:0;top:683px;width:550px;height:1px;background:#4a4a4a"></div>
<div class="abs" style="left:0;top:684px;width:550px;height:26px;background:#2b2b2b"></div>
<svg class="abs" style="left:15.500px;top:690px" width="4" height="15" viewBox="0 0 4 15" fill="#a0a0a0"><circle cx="2" cy="2" r="1.600"/><circle cx="2" cy="7.500" r="1.600"/><circle cx="2" cy="13" r="1.600"/></svg>
<div class="abs" style="left:29px;top:684px;width:62px;height:26px;background:#000"></div>
<div class="abs dtab" style="left:38px;top:690px;color:#fff">Console</div>
<div class="abs dtab" style="left:100px;top:690px">Task</div>
<svg class="abs" style="left:527px;top:691px" width="12" height="12" viewBox="0 0 12 12" fill="none" stroke="#c0c0c0" stroke-width="1.300"><path d="M1.500 1.500l9 9M10.500 1.500l-9 9"/></svg>
<div class="abs" style="left:0;top:710px;width:550px;height:1px;background:#3d3d3d"></div>
<div class="abs" style="left:0;top:711px;width:550px;height:27px;background:#2b2b2b"></div>
<svg class="abs" style="left:9px;top:717.500px" width="15" height="13" viewBox="0 0 16 14" fill="none" stroke="#9a9a9a" stroke-width="1.100"><rect x=".6" y=".6" width="14.800" height="12.800"/><path d="M4.500 .6v12.800"/><path d="M7.500 4l4.500 3l-4.500 3z" fill="#9a9a9a" stroke="none"/></svg>
<svg class="abs" style="left:38.500px;top:717.500px" width="14" height="14" viewBox="0 0 14 14" fill="none" stroke="#9a9a9a" stroke-width="2"><circle cx="7" cy="7" r="5.600"/><path d="M3 3l8 8"/></svg>
<div class="abs" style="left:63px;top:716px;width:1px;height:17px;background:#3a3a3a"></div>
<div class="abs dtab" style="left:73px;top:717px;color:#d8d8d8">appservice (#3)</div>
<span class="abs" style="left:193px;top:721px;width:0;height:0;border-left:4px solid transparent;border-right:4px solid transparent;border-top:7px solid #8a8a8a"></span>
<div class="abs" style="left:210px;top:716px;width:1px;height:17px;background:#3a3a3a"></div>
<svg class="abs" style="left:220px;top:717px" width="18" height="13" viewBox="0 0 18 13"><path d="M.8 6.500c3.500-7 12.900-7 16.400 0c-3.500 7-12.900 7-16.400 0z" fill="#a0a0a0"/><circle cx="9" cy="6.500" r="3.400" fill="#2b2b2b"/><circle cx="9" cy="6.500" r="1.900" fill="#a0a0a0"/></svg>
<div class="abs" style="left:247px;top:716px;width:1px;height:17px;background:#3a3a3a"></div>
<div class="abs" style="left:254px;top:714px;width:98px;height:21px;border:1px solid #555;background:#242424"></div>
<div class="abs dtab" style="left:259px;top:718px;color:#b8b8b8">Filter</div>
<div class="abs dtab" style="left:360px;top:717px;color:#d8d8d8">Default levels</div>
<span class="abs" style="left:436px;top:721px;width:0;height:0;border-left:3.500px solid transparent;border-right:3.500px solid transparent;border-top:6px solid #8a8a8a"></span>
<div class="abs" style="left:457px;top:716px;width:1px;height:17px;background:#3a3a3a"></div>
<div class="abs dtab" style="left:467px;top:717px;color:#9a9a9a">1 hidden</div>
<svg class="abs" style="left:525px;top:716px" width="16" height="16" viewBox="0 0 16 16"><path d="M6.800 .8h2.400l.4 2a5.400 5.400 0 0 1 1.400.8l1.900-.7l1.200 2.100l-1.500 1.300a5.400 5.400 0 0 1 0 1.600l1.500 1.300l-1.200 2.100l-1.900-.7a5.400 5.400 0 0 1-1.400.8l-.4 2h-2.400l-.4-2a5.400 5.400 0 0 1-1.400-.8l-1.900.7l-1.200-2.100l1.500-1.300a5.400 5.400 0 0 1 0-1.600l-1.500-1.300l1.200-2.100l1.900.7a5.400 5.400 0 0 1 1.400-.8z" fill="#a8a8a8"/><circle cx="8" cy="8" r="2.300" fill="#2b2b2b"/></svg>
<!-- console messages -->
<div class="abs" style="left:535px;top:738px;width:15px;height:145px;background:#2a2a2a"></div>
<div class="abs" style="left:535px;top:866px;width:14px;height:17px;background:#3e3e3e"></div>
<div class="abs warn" style="top:738px;height:28px"></div>
<pre class="abs con" style="left:39px;top:735px">component: pages/popupRemind/update-and-add. Please make sure that
handler has been defined in pages/popupRemind/update-and-add.</pre>
<div class="abs" style="left:0;top:797px;width:535px;height:1px;background:#3a3a3a"></div>
<span class="abs" style="left:11px;top:772px;width:0;height:0;border-left:3.500px solid transparent;border-right:3.500px solid transparent;border-top:6px solid #8a8a8a"></span>
<pre class="abs con" style="left:25px;top:769px">Sat Mar 22 2025 15:38:32
GMT+0800 (<span class="cj">中国标准时间</span>) <span class="cj">事件警告</span></pre>
<pre class="abs con lnk" style="left:242px;top:769px">WASubContext.js?t=we…28496001&amp;v=2.19.4:2</pre>
<div class="abs warn" style="top:798px;height:48px"></div>
<svg class="abs" style="left:21.500px;top:803.500px" width="11" height="10" viewBox="0 0 14 13"><path d="M7 .5l6.500 12h-13z" fill="#f2c12e"/><path d="M7 4.500v4M7 9.700v1.400" stroke="#fff" stroke-width="1.500"/></svg>
<span class="abs" style="left:41px;top:806px;width:0;height:0;border-top:3.500px solid transparent;border-bottom:3.500px solid transparent;border-left:5.500px solid #8a8a8a"></span>
<pre class="abs con" style="left:48px;top:803px">Do not have  handler in</pre>
<pre class="abs con lnk" style="left:242px;top:803px">WASubContext.js?t=we…28496001&amp;v=2.19.4:2</pre>
<pre class="abs con" style="left:39px;top:817px">component: pages/popupRemind/update-and-add. Please make sure that
handler has been defined in pages/popupRemind/update-and-add.</pre>
<div class="abs" style="left:14px;top:738px;width:1px;height:27px;background:#6b5a10"></div>
<div class="abs" style="left:14px;top:798px;width:1px;height:47px;background:#6b5a10"></div>
<svg class="abs" style="left:10px;top:851px" width="7" height="10" viewBox="0 0 7 10" fill="none" stroke="#3a78e0" stroke-width="1.600"><path d="M1 1l4 4l-4 4"/></svg>

</div>
<div id="stat"></div>
<div class="abs" style="left:700px;top:0;width:1px;height:883px;background:#242424"></div>
</div>

<div class="abs" style="left:1583px;top:442px;width:84px;height:1px;background:#e4e4e4"></div>
<div class="abs" style="left:1583px;top:509px;width:84px;height:1px;background:#e4e4e4"></div>
<div id="ime" class="abs" style="left:1740px;top:905px;width:172px;height:25px;background:#222"></div>
<div class="abs" style="left:1718px;top:903px;width:29px;height:30px;border-radius:4px;background:linear-gradient(180deg,#f0602e,#e8421e);transform:rotate(-16deg);overflow:hidden"><div style="position:absolute;left:2px;top:-2px;width:24px;height:30px;font:italic bold 25px/30px 'Liberation Sans',sans-serif;color:#fff;transform:rotate(8deg) scaleX(1.55);text-align:center">S</div></div>
<div class="abs" style="left:1753px;top:909px;font-size:15px;font-weight:bold;line-height:20px;color:#fff">中</div>
<div class="abs" style="left:1779px;top:908px;font:bold 13px/16px 'Liberation Sans',sans-serif;color:#fff">°</div>
<div class="abs" style="left:1786px;top:903px;font:bold 19px/22px 'Liberation Sans',sans-serif;color:#fff">,</div>
<svg class="abs" style="left:1801px;top:908px" width="110" height="20" viewBox="0 0 110 20">
<rect x="5.500" y="1.500" width="5.400" height="10" rx="2.700" fill="#e4e4e4"/><path d="M2.700 8.500a5.500 5.500 0 0 0 11 0M8.200 14v3M5.700 17.300h5" fill="none" stroke="#f0f0f0" stroke-width="1.400"/>
<rect x="26" y="3.500" width="14" height="11.500" rx="1.200" fill="#f4f4f4"/><path d="M28 6.500h10.500M28 9h10.500" stroke="#222" stroke-width="1.300" stroke-dasharray="1.500 1.100"/><path d="M30 12.300h6.500" stroke="#222" stroke-width="1.300"/>
<path d="M52.500 3l-3.800 2.800l1.800 3l1.700-1v8h8.600v-8l1.700 1l1.800-3l-3.800-2.800c-1.300 1.300-3.700 1.300-5 0z" fill="#e4e4e4"/>
<rect x="74" y="3" width="5.700" height="5.700" rx="1.500" fill="#f0f0f0"/><rect x="81.500" y="3" width="5.700" height="5.700" rx="1.500" fill="#f0f0f0"/><rect x="74" y="10.500" width="5.700" height="5.700" rx="1.500" fill="#f0f0f0"/><rect x="81.500" y="10.500" width="5.700" height="5.700" rx="1.500" fill="#f0f0f0"/><rect x="83.500" y="4.800" width="1.800" height="1.800" fill="#222"/>
<circle cx="104" cy="10" r="9.500" fill="#fbfbfb"/><path d="M96 2l2-4l4 3zM106 1l4-3l1 5z" fill="#fbfbfb"/><rect x="97" y="6" width="10" height="5" rx="2" fill="#d9682e"/><circle cx="100" cy="8.500" r="1" fill="#333"/><circle cx="104" cy="8.500" r="1" fill="#333"/>
</svg>

</body>
</html>
